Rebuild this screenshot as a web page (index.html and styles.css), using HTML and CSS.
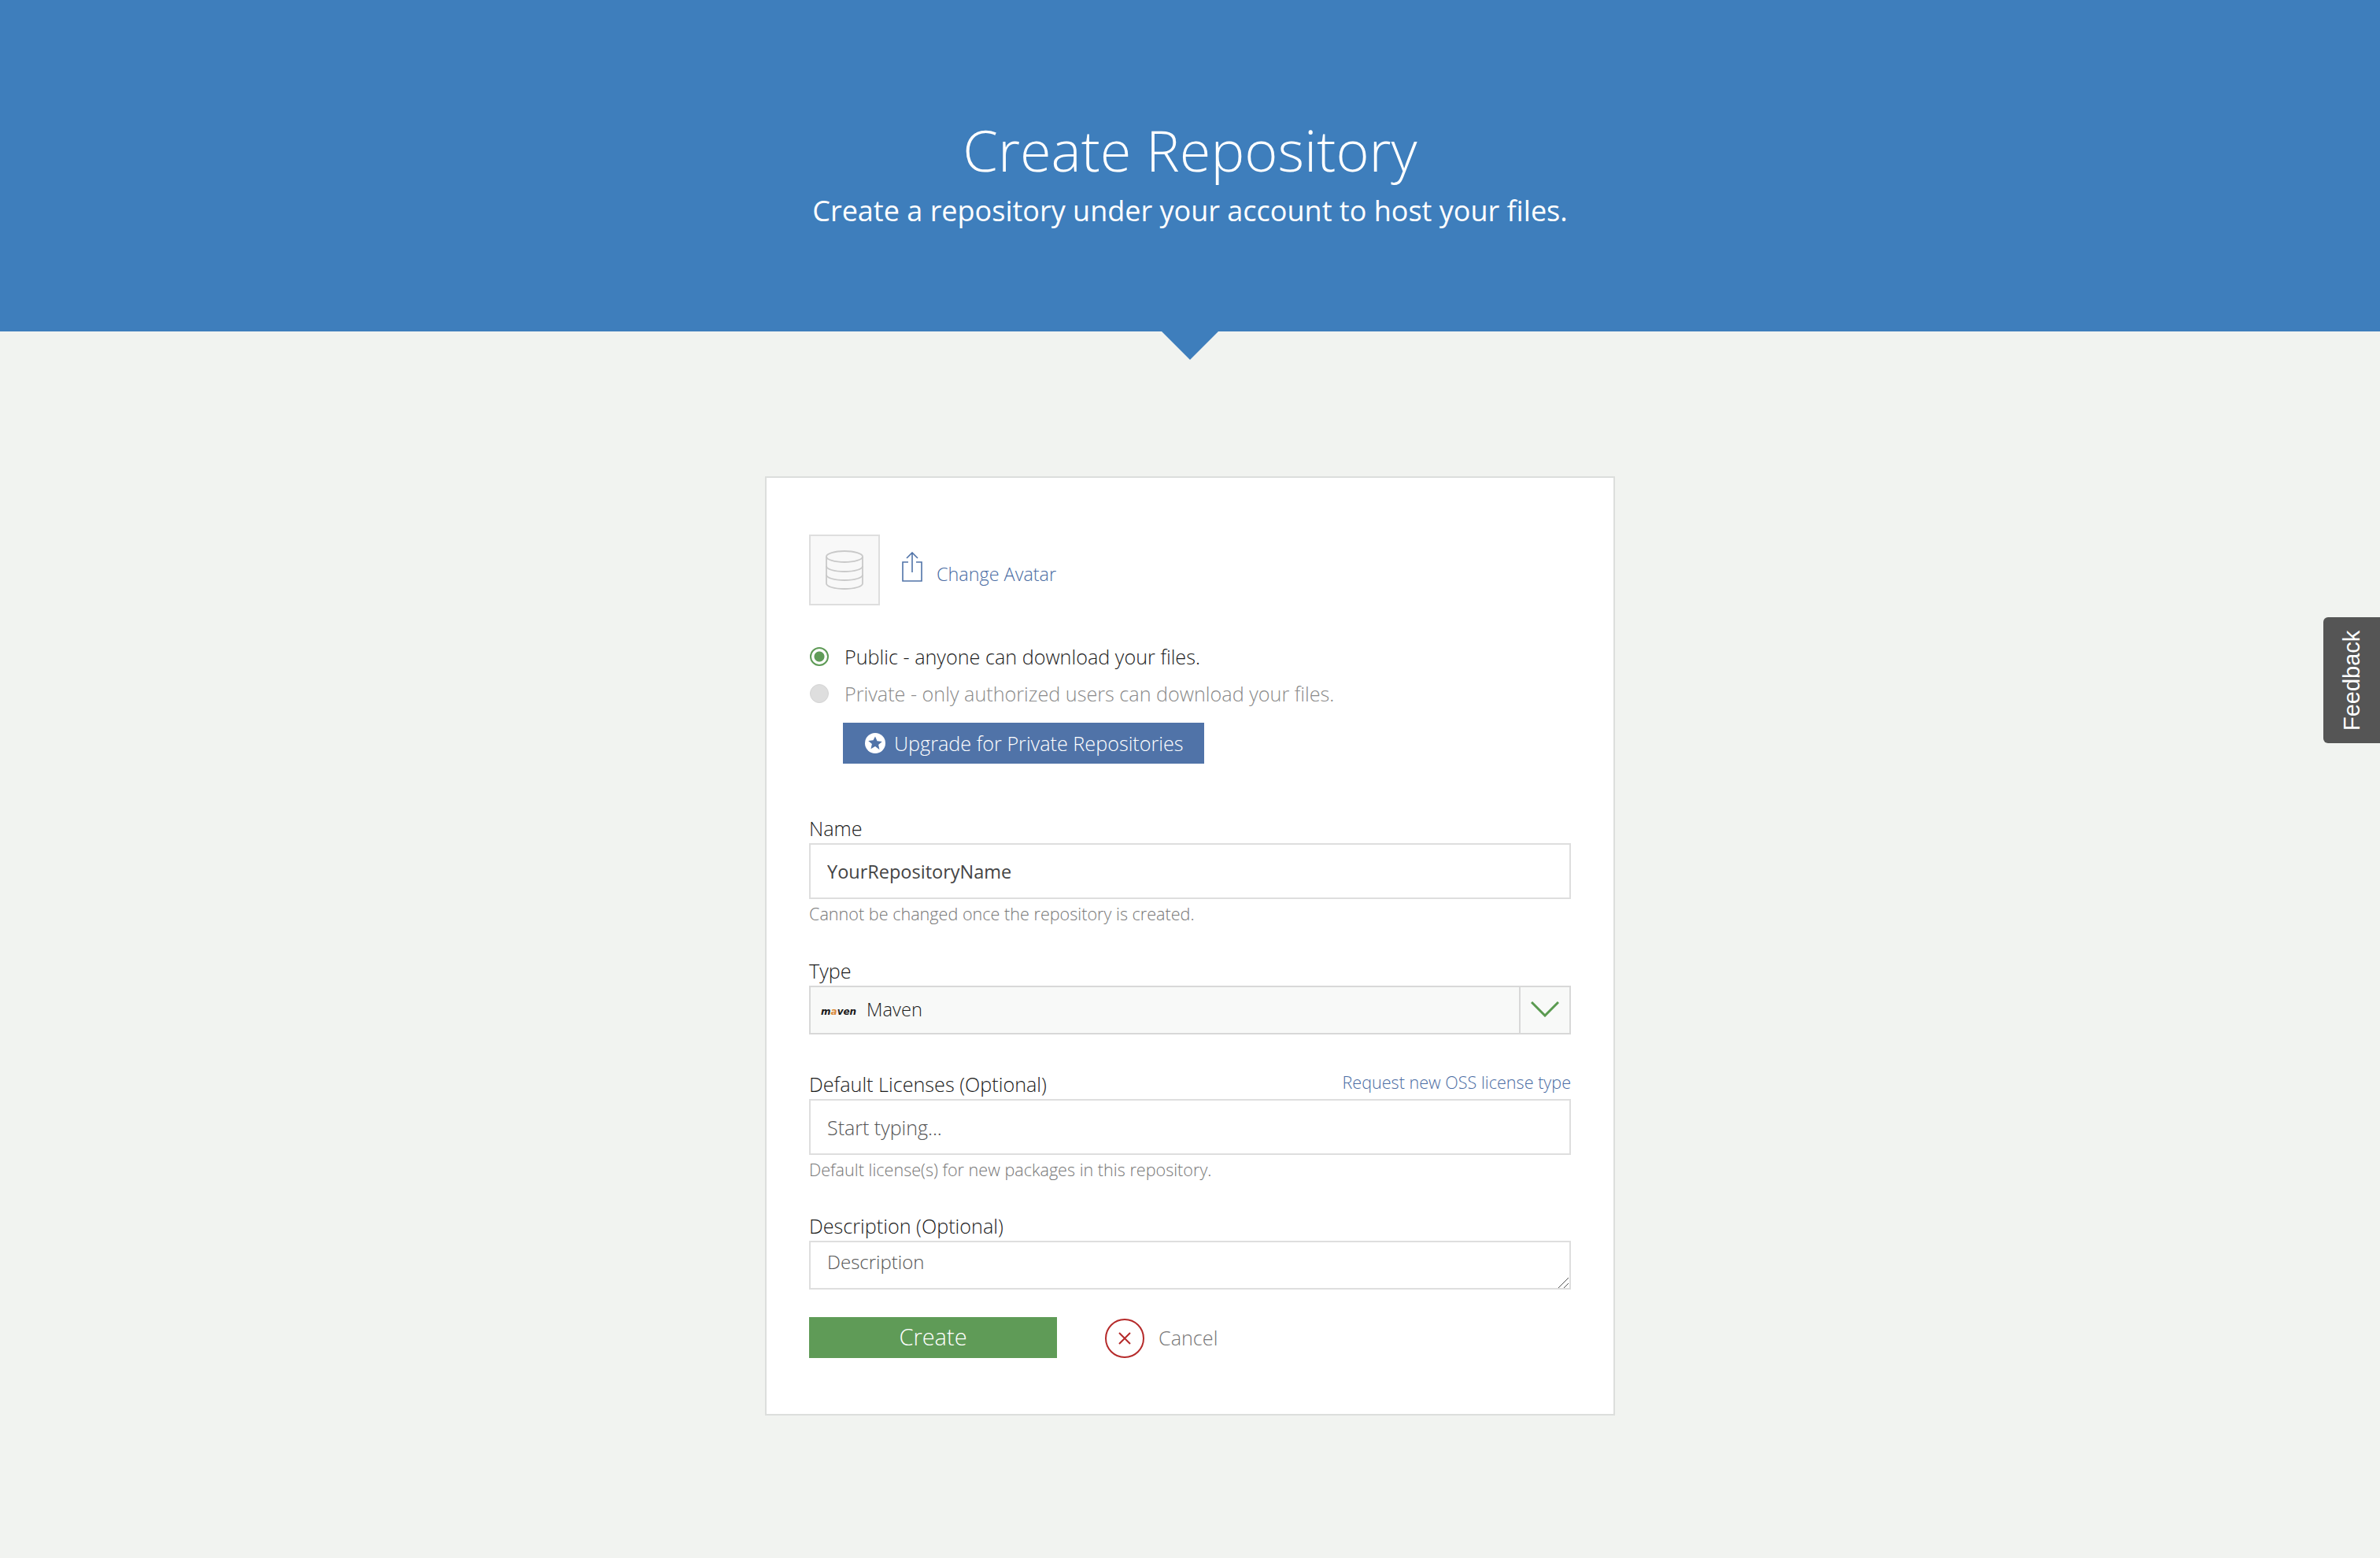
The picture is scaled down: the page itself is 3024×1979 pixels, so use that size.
FILE: index.html
```html
<!DOCTYPE html>
<html lang="en">
<head>
<meta charset="utf-8">
<title>Create Repository</title>
<link rel="stylesheet" href="styles.css">
</head>
<body>
<header class="hero">
  <h1 class="hero-title">Create Repository</h1>
  <p class="hero-sub">Create a repository under your account to host your files.</p>
  <span class="hero-arrow"></span>
</header>
<main class="page">
  <form class="card">
    <div class="avatar-row">
      <div class="avatar-box">
        <svg class="db-icon" viewBox="0 0 48 50" fill="none" stroke="#c9c9c9" stroke-width="1.8">
          <ellipse cx="24" cy="8" rx="23" ry="7"/>
          <path d="M1 8v34c0 4 10 7 23 7s23-3 23-7V8"/>
          <path d="M1 20c0 4 10 7 23 7s23-3 23-7"/>
          <path d="M1 31c0 4 10 7 23 7s23-3 23-7"/>
        </svg>
      </div>
      <svg class="upload-icon" viewBox="0 0 26 38" fill="none" stroke="#5073a8" stroke-width="1.6">
        <path d="M8 13H1v24h24V13h-7"/>
        <path d="M13 26V1M6 8l7-7 7 7"/>
      </svg>
      <a class="avatar-link">Change Avatar</a>
    </div>
    <div class="radio-row">
      <span class="radio radio-on"></span>
      <span class="radio-text">Public - anyone can download your files.</span>
    </div>
    <div class="radio-row radio-row-off">
      <span class="radio radio-off"></span>
      <span class="radio-text">Private - only authorized users can download your files.</span>
    </div>
    <a class="upgrade">
      <svg class="star-icon" viewBox="0 0 26 26">
        <circle cx="13" cy="13" r="13" fill="#fff"/>
        <path fill="#5073a8" d="M13 4.5l2.5 5.8 6.3.6-4.7 4.2 1.4 6.2L13 17.1l-5.5 3.2 1.4-6.2-4.7-4.2 6.3-.6z"/>
      </svg>
      Upgrade for Private Repositories
    </a>
    <label class="label label-name">Name</label>
    <input class="field field-text" type="text" value="YourRepositoryName">
    <p class="hint">Cannot be changed once the repository is created.</p>
    <label class="label label-type">Type</label>
    <div class="select">
      <span class="maven-logo">m<span class="maven-a">a</span>ven</span>
      <span class="select-value">Maven</span>
      <span class="select-caret">
        <svg class="chevron" viewBox="0 0 36 20" fill="none" stroke="#5a9a50" stroke-width="3">
          <path d="M1 1l17 17L35 1"/>
        </svg>
      </span>
    </div>
    <div class="label-row">
      <label class="label">Default Licenses (Optional)</label>
      <a class="license-link">Request new OSS license type</a>
    </div>
    <input class="field field-text field-plain" type="text" placeholder="Start typing...">
    <p class="hint">Default license(s) for new packages in this repository.</p>
    <label class="label label-desc">Description (Optional)</label>
    <div class="area-wrap">
      <textarea class="field field-area" placeholder="Description"></textarea>
      <svg class="resizer" viewBox="0 0 13 13" fill="none" stroke="#555" stroke-width="1">
        <path d="M0 13L13 0M7 13l6-6"/>
      </svg>
    </div>
    <div class="actions">
      <button class="create" type="button">Create</button>
      <a class="cancel">
        <svg class="cancel-icon" viewBox="0 0 50 50" fill="none" stroke="#b52a2a" stroke-width="2">
          <circle cx="25" cy="25" r="24"/>
          <path d="M18 18l14 14M32 18L18 32"/>
        </svg>
        <span class="cancel-text">Cancel</span>
      </a>
    </div>
  </form>
</main>
<a class="feedback">Feedback</a>
</body>
</html>
```
FILE: styles.css
```css
* { box-sizing: border-box; }
html, body { margin: 0; padding: 0; }
body {
  height: 1979px;
  overflow: hidden;
  background: #f1f3f0;
  font-family: "Open Sans", sans-serif;
  color: #333;
  position: relative;
}
.hero {
  position: relative;
  height: 421px;
  background: #3e7ebc;
  color: #fff;
  text-align: center;
  padding-top: 139px;
}
.hero-title {
  margin: 0;
  font-size: 72px;
  font-weight: 300;
  line-height: 102px;
}
.hero-sub {
  margin: 1px 0 0;
  font-size: 36px;
  font-weight: 400;
  line-height: 52px;
}
.hero-arrow {
  position: absolute;
  left: 1476px;
  top: 421px;
  width: 0;
  height: 0;
  border-left: 36px solid transparent;
  border-right: 36px solid transparent;
  border-top: 36px solid #3e7ebc;
}
.page {
  display: flex;
  justify-content: center;
  padding-top: 184px;
}
.card {
  width: 1080px;
  height: 1193px;
  background: #fff;
  border: 2px solid #dcdedc;
  padding: 72px 54px 0;
}
.avatar-row {
  display: flex;
  align-items: flex-start;
  height: 89px;
}
.avatar-box {
  width: 90px;
  height: 90px;
  background: #f8f8f8;
  border: 2px solid #dedede;
  display: flex;
  align-items: center;
  justify-content: center;
}
.db-icon { width: 48px; height: 50px; }
.upload-icon { width: 26px; height: 38px; margin: 22px 0 0 28px; }
.avatar-link {
  color: #4a6ca3;
  font-size: 23.4px;
  font-weight: 300;
  line-height: 34px;
  margin: 33px 0 0 18px;
}
.radio-row {
  display: flex;
  align-items: center;
  height: 47px;
  margin-top: 42px;
}
.radio-row-off { margin-top: 0; color: #999; }
.radio {
  width: 24px;
  height: 24px;
  border-radius: 50%;
  margin-left: 1px;
  margin-right: 20px;
  flex: none;
}
.radio-on {
  border: 2px solid #5f9b57;
  background: radial-gradient(circle, #5f9b57 0 6px, #fff 7px);
}
.radio-off { background: #dedede; border: 1px solid #d4d4d4; }
.radio-text { font-size: 25.2px; font-weight: 300; color: #1c1c1c; }
.radio-row-off .radio-text { color: #8a8a8a; }
.upgrade {
  display: flex;
  align-items: center;
  width: 459px;
  height: 52px;
  margin: 14px 0 0 43px;
  padding-left: 28px;
  background: #5073a8;
  color: #fff;
  font-size: 25.2px;
  font-weight: 300;
}
.star-icon { width: 26px; height: 26px; margin-right: 11px; flex: none; }
.label {
  display: block;
  height: 36px;
  font-size: 25.2px;
  font-weight: 300;
  line-height: 34px;
  color: #1c1c1c;
}
.label-name { margin-top: 65px; }
.label-type { margin-top: 40px; }
.label-desc { margin-top: 39px; }
.field {
  display: block;
  width: 100%;
  background: #fff;
  border: 2px solid #dedede;
  border-radius: 0;
  font-family: "Open Sans", sans-serif;
  font-size: 23.5px;
  font-weight: 400;
  color: #444;
  padding: 0 21px;
  outline: none;
}
.field::placeholder { color: #555; font-weight: 300; opacity: 1; }
.field-text { height: 71px; }
.field-plain { font-size: 25px; }
.area-wrap { position: relative; }
.field-area {
  height: 62px;
  padding-top: 8px;
  line-height: 34px;
  font-size: 24px;
  resize: none;
}
.resizer {
  position: absolute;
  right: 3px;
  bottom: 2px;
  width: 13px;
  height: 13px;
}
.hint {
  margin: 4px 0 0;
  height: 30px;
  font-size: 21.6px;
  font-weight: 300;
  line-height: 30px;
  color: #777;
}
.select {
  display: flex;
  align-items: center;
  height: 62px;
  background: #f8f9f8;
  border: 2px solid #d8d8d8;
}
.maven-logo {
  font-family: "DejaVu Sans", sans-serif;
  font-weight: 700;
  font-style: italic;
  font-size: 12px;
  color: #1a1a1a;
  margin-left: 13px;
  width: 45px;
  padding-top: 3px;
  flex: none;
}
.maven-a { color: #d98a3c; }
.select-value {
  flex: 1;
  font-size: 23.7px;
  font-weight: 300;
  margin-left: 13px;
  padding-bottom: 2px;
  color: #1c1c1c;
}
.select-caret {
  width: 64px;
  height: 100%;
  border-left: 2px solid #d8d8d8;
  display: flex;
  align-items: center;
  justify-content: center;
  flex: none;
}
.chevron { width: 36px; height: 20px; margin-bottom: 2px; }
.label-row {
  display: flex;
  justify-content: space-between;
  align-items: flex-start;
  height: 36px;
  margin-top: 46px;
}
.license-link {
  color: #4a6ca3;
  font-size: 21.6px;
  font-weight: 300;
  line-height: 30px;
}
.actions {
  display: flex;
  align-items: center;
  margin-top: 35px;
  height: 52px;
}
.create {
  width: 315px;
  height: 52px;
  background: #5f9b57;
  border: 0;
  color: #fff;
  font-family: "Open Sans", sans-serif;
  font-size: 29px;
  font-weight: 300;
  padding: 0 0 3px;
}
.cancel {
  display: flex;
  align-items: center;
  margin-left: 61px;
  padding-top: 2px;
}
.cancel-icon { width: 50px; height: 50px; margin-right: 18px; }
.cancel-text { font-size: 25.2px; font-weight: 300; color: #777; padding-bottom: 2px; }
.feedback {
  position: absolute;
  right: 0;
  top: 784px;
  width: 72px;
  height: 160px;
  background: #555;
  color: #fff;
  font-family: "Liberation Sans", sans-serif;
  font-size: 29px;
  writing-mode: vertical-rl;
  transform: rotate(180deg);
  border-radius: 0 6px 6px 0;
  display: flex;
  align-items: center;
  justify-content: center;
  padding-right: 1px;
}
```
